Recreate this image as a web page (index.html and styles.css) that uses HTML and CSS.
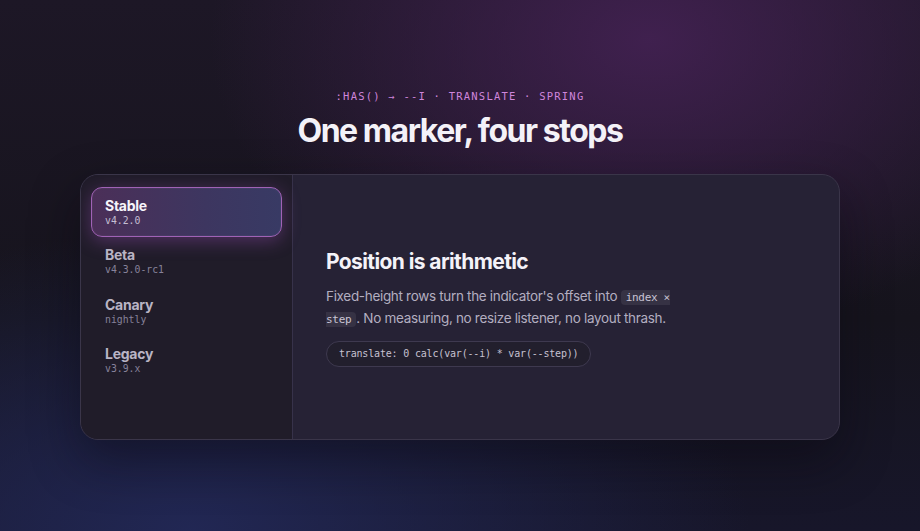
FILE: index.html
```html
<!DOCTYPE html>
<html lang="en">
<head>
<meta charset="utf-8">
<title>One marker, four stops</title>
<link rel="stylesheet" href="styles.css">
</head>
<body>
<main class="stage">
  <header class="intro">
    <p class="eyebrow">:has() → --i · translate · spring</p>
    <h1 class="title">One marker, four stops</h1>
  </header>
  <section class="card">
    <nav class="rail">
      <a class="row is-active"><span class="row-name">Stable</span><span class="row-ver">v4.2.0</span></a>
      <a class="row"><span class="row-name">Beta</span><span class="row-ver">v4.3.0-rc1</span></a>
      <a class="row"><span class="row-name">Canary</span><span class="row-ver">nightly</span></a>
      <a class="row"><span class="row-name">Legacy</span><span class="row-ver">v3.9.x</span></a>
    </nav>
    <div class="panel">
      <div class="panel-body">
        <h2 class="panel-title">Position is arithmetic</h2>
        <p class="panel-text">Fixed-height rows turn the indicator's offset into <code class="kbd">index × step</code>. No measuring, no resize listener, no layout thrash.</p>
        <code class="pill">translate: 0 calc(var(--i) * var(--step))</code>
      </div>
    </div>
  </section>
</main>
</body>
</html>
```
FILE: styles.css
```css
* { box-sizing: border-box; }
html, body { margin: 0; height: 100%; }
body {
  font-family: Inter, "Noto Sans", sans-serif;
  color: #f2f0f7;
  background:
    radial-gradient(ellipse 440px 300px at 650px 40px, rgba(70, 34, 86, 0.85), rgba(70, 34, 86, 0) 100%),
    radial-gradient(ellipse 560px 300px at 190px 531px, rgba(34, 40, 86, 0.95), rgba(34, 40, 86, 0) 100%),
    linear-gradient(180deg, #1d1726 0%, #16141d 60%, #17162a 100%);
  overflow: hidden;
}
.stage {
  height: 100%;
  display: flex;
  flex-direction: column;
  align-items: center;
  padding-top: 89px;
}
.intro { text-align: center; }
.eyebrow {
  margin: 0;
  font-family: "DejaVu Sans Mono", monospace;
  font-size: 10.5px;
  line-height: 14px;
  letter-spacing: 1.22px;
  text-transform: uppercase;
  color: #cf86dc;
}
.title {
  margin: 8px 0 0;
  font-size: 32px;
  line-height: 40px;
  font-weight: 700;
  letter-spacing: -1.45px;
  color: #f4f2f8;
}
.card {
  margin-top: 23px;
  width: 760px;
  height: 266px;
  display: flex;
  border: 1px solid #3a3549;
  border-radius: 18px;
  overflow: hidden;
  background: #262235;
  box-shadow: 0 20px 50px rgba(8, 6, 16, 0.45);
}
.rail {
  width: 212px;
  flex: none;
  background: #201c29;
  border-right: 1px solid #37324a;
  padding: 12px 10px;
  display: flex;
  flex-direction: column;
}
.row {
  height: 49.5px;
  display: flex;
  flex-direction: column;
  justify-content: center;
  padding: 0 13px;
  border: 1px solid transparent;
  border-radius: 11px;
}
.row.is-active {
  background: linear-gradient(90deg, #4b2f58 0%, #3d3660 60%, #383a64 100%);
  border-color: #a062b6;
  box-shadow: 0 4px 18px rgba(176, 90, 210, 0.35), inset 0 0 0 1px rgba(255, 255, 255, 0.03);
}
.row-name {
  font-size: 14px;
  line-height: 17px;
  font-weight: 700;
  letter-spacing: -0.25px;
  color: #b9b4c4;
}
.row-ver {
  font-family: "DejaVu Sans Mono", monospace;
  font-size: 9.8px;
  line-height: 13px;
  color: #87829a;
}
.is-active .row-name { color: #f7f5fb; }
.is-active .row-ver { color: #c4bed2; }
.panel {
  flex: 1;
  display: flex;
  align-items: center;
  padding: 0 33px;
}
.panel-title {
  margin: 0;
  font-size: 21px;
  line-height: 28px;
  font-weight: 700;
  letter-spacing: -0.6px;
  color: #f4f2f8;
}
.panel-text {
  margin: 10px 0 0;
  max-width: 352px;
  font-size: 13.5px;
  line-height: 21.5px;
  letter-spacing: -0.32px;
  color: #b3aec0;
}
.kbd {
  font-family: "DejaVu Sans Mono", monospace;
  font-size: 11px;
  letter-spacing: -0.3px;
  color: #c9c4d4;
  background: #363244;
  border-radius: 4px;
  padding: 1px 5px;
}
.pill {
  display: inline-block;
  margin-top: 10px;
  height: 26px;
  line-height: 24px;
  padding: 0 12px;
  border: 1px solid #3e394f;
  border-radius: 13px;
  background: #221f2d;
  font-family: "DejaVu Sans Mono", monospace;
  font-size: 10px;
  letter-spacing: -0.18px;
  color: #c6c1d1;
}
```
